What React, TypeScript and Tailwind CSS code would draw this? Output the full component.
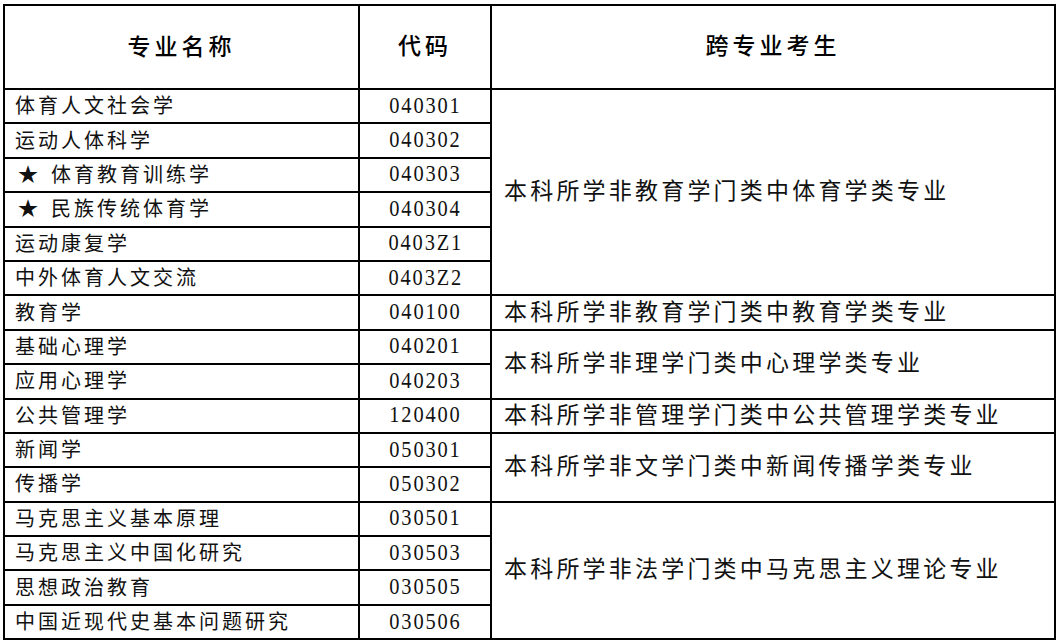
const CJK = "font-['Liberation_Serif','Noto_Sans_CJK_SC',serif]";

type Row = { name: string; star?: boolean; code: string };
type Group = { rows: Row[]; note: string };

const GROUPS: Group[] = [
  {
    note: "本科所学非教育学门类中体育学类专业",
    rows: [
      { name: "体育人文社会学", code: "040301" },
      { name: "运动人体科学", code: "040302" },
      { name: "体育教育训练学", star: true, code: "040303" },
      { name: "民族传统体育学", star: true, code: "040304" },
      { name: "运动康复学", code: "0403Z1" },
      { name: "中外体育人文交流", code: "0403Z2" },
    ],
  },
  { note: "本科所学非教育学门类中教育学类专业", rows: [{ name: "教育学", code: "040100" }] },
  {
    note: "本科所学非理学门类中心理学类专业",
    rows: [
      { name: "基础心理学", code: "040201" },
      { name: "应用心理学", code: "040203" },
    ],
  },
  { note: "本科所学非管理学门类中公共管理学类专业", rows: [{ name: "公共管理学", code: "120400" }] },
  {
    note: "本科所学非文学门类中新闻传播学类专业",
    rows: [
      { name: "新闻学", code: "050301" },
      { name: "传播学", code: "050302" },
    ],
  },
  {
    note: "本科所学非法学门类中马克思主义理论专业",
    rows: [
      { name: "马克思主义基本原理", code: "030501" },
      { name: "马克思主义中国化研究", code: "030503" },
      { name: "思想政治教育", code: "030505" },
      { name: "中国近现代史基本问题研究", code: "030506" },
    ],
  },
];

export default function App() {
  return (
    <div className="w-[1058px] h-[642px] bg-white pt-[4px] pl-[3px]">
      <table className={`w-[1053px] border-collapse border-2 border-black text-black ${CJK}`}>
        <thead>
          <tr className="h-[84px]">
            <th className="w-[355px] border-2 border-black text-[23px] font-medium tracking-[4px] text-center pt-[2px]">专业名称</th>
            <th className="w-[132px] border-2 border-black text-[23px] font-medium tracking-[4px] text-center">代码</th>
            <th className="border-2 border-black text-[23px] font-medium tracking-[4px] text-center">跨专业考生</th>
          </tr>
        </thead>
        <tbody>
          {GROUPS.map((g) =>
            g.rows.map((r, i) => (
              <tr key={r.code} className="h-[34.4px]">
                <td className="border-2 border-black pl-[10px] text-[20px] leading-[26px] tracking-[3px] text-[#111] whitespace-nowrap">
                  {r.star && <span className="mr-[10px] ml-[3px]">★</span>}
                  {r.name}
                </td>
                <td className="border-2 border-black text-center leading-[26px] text-[#111]">
                  <span className="inline-block text-[24px] tracking-[2.2px] scale-x-[0.85] pl-[2px]">{r.code}</span>
                </td>
                {i === 0 && (
                  <td rowSpan={g.rows.length} className="border-2 border-black pl-[12px] text-[23px] leading-[26px] tracking-[3.2px] text-[#111] whitespace-nowrap">
                    {g.note}
                  </td>
                )}
              </tr>
            ))
          )}
        </tbody>
      </table>
    </div>
  );
}
